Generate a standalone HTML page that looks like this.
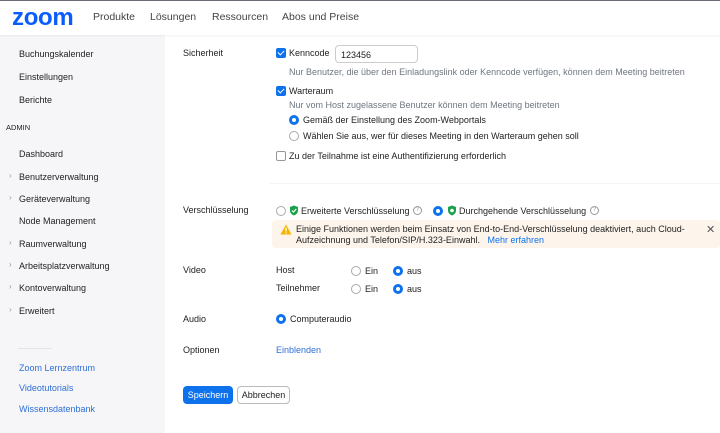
<!DOCTYPE html>
<html><head><meta charset="utf-8"><style>
*{margin:0;padding:0;box-sizing:border-box}
body{width:720px;height:433px;overflow:hidden;background:#fff;font-family:"Liberation Sans",sans-serif;font-size:9px;color:#222;position:relative}
.a{position:absolute;white-space:nowrap}
.side{position:absolute;left:0;top:35px;width:165px;height:398px;background:#f6f6f8}
.hdr{position:absolute;left:0;top:0;width:720px;height:35px;background:#fff;border-top:1px solid #6b6b75;box-shadow:0 1px 2px rgba(0,0,0,.06)}
.nav{font-size:10.5px;color:#444;top:11px}
.s{left:19px;color:#222}
.c{color:#999;font-size:8px}
.gray{color:#6e7680}
.blue{color:#0e72ed}
.cb{position:absolute;width:10px;height:10px;border-radius:2px;background:#0e72ed}
.cb::after{content:"";position:absolute;left:3px;top:1px;width:3px;height:5px;border:solid #fff;border-width:0 1.5px 1.5px 0;transform:rotate(45deg)}
.cbo{position:absolute;width:10px;height:10px;border-radius:2px;border:1px solid #999;background:#fff}
.r{position:absolute;width:10px;height:10px;border-radius:50%;border:1px solid #aaa;background:#fff}
.ro{position:absolute;width:10px;height:10px;border-radius:50%;border:3px solid #0e72ed;background:#fff}
.q{position:absolute;width:9px;height:9px;border:1px solid #999;border-radius:50%;font-size:6px;line-height:7px;text-align:center;color:#999}
</style></head><body>
<div class="side"></div>
<div class="hdr"></div>
<div class="a" style="left:12px;top:4px;font-size:24px;font-weight:bold;color:#0b5cff;letter-spacing:-0.3px">zoom</div>
<div class="a nav" style="left:93px">Produkte</div>
<div class="a nav" style="left:150px">Lösungen</div>
<div class="a nav" style="left:212px">Ressourcen</div>
<div class="a nav" style="left:282px">Abos und Preise</div>

<div class="a s" style="top:49px">Buchungskalender</div>
<div class="a s" style="top:72px">Einstellungen</div>
<div class="a s" style="top:95px">Berichte</div>
<div class="a" style="left:6px;top:123px;font-size:7.5px">ADMIN</div>
<div class="a s" style="top:149px">Dashboard</div>
<div class="a s" style="top:172px">Benutzerverwaltung</div>
<div class="a s" style="top:194px">Geräteverwaltung</div>
<div class="a s" style="top:216px">Node Management</div>
<div class="a s" style="top:239px">Raumverwaltung</div>
<div class="a s" style="top:261px">Arbeitsplatzverwaltung</div>
<div class="a s" style="top:283px">Kontoverwaltung</div>
<div class="a s" style="top:306px">Erweitert</div>
<div class="a c" style="left:9px;top:171px">›</div>
<div class="a c" style="left:9px;top:193px">›</div>
<div class="a c" style="left:9px;top:238px">›</div>
<div class="a c" style="left:9px;top:260px">›</div>
<div class="a c" style="left:9px;top:282px">›</div>
<div class="a c" style="left:9px;top:305px">›</div>
<div class="a" style="left:18px;top:348px;width:34px;border-top:1px solid #e4e4e8"></div>
<div class="a s" style="top:363px;color:#2d6fd6">Zoom Lernzentrum</div>
<div class="a s" style="top:383px;color:#2d6fd6">Videotutorials</div>
<div class="a s" style="top:404px;color:#2d6fd6">Wissensdatenbank</div>

<div class="a" style="left:183px;top:48px">Sicherheit</div>
<div class="cb" style="left:276px;top:48px"></div>
<div class="a" style="left:289px;top:48px">Kenncode</div>
<div class="a" style="left:335px;top:45px;width:83px;height:18px;border:1px solid #ccc;border-radius:4px;padding:4px 0 0 5px">123456</div>
<div class="a gray" style="left:289px;top:67px">Nur Benutzer, die über den Einladungslink oder Kenncode verfügen, können dem Meeting beitreten</div>
<div class="cb" style="left:276px;top:86px"></div>
<div class="a" style="left:289px;top:86px">Warteraum</div>
<div class="a gray" style="left:289px;top:100px">Nur vom Host zugelassene Benutzer können dem Meeting beitreten</div>
<div class="ro" style="left:289px;top:115px"></div>
<div class="a" style="left:303px;top:115px">Gemäß der Einstellung des Zoom-Webportals</div>
<div class="r" style="left:289px;top:131px"></div>
<div class="a" style="left:303px;top:131px">Wählen Sie aus, wer für dieses Meeting in den Warteraum gehen soll</div>
<div class="cbo" style="left:276px;top:151px"></div>
<div class="a" style="left:289px;top:151px">Zu der Teilnahme ist eine Authentifizierung erforderlich</div>
<div class="a" style="left:270px;top:183px;width:450px;border-top:1px solid #f4f4f6"></div>

<div class="a" style="left:183px;top:205px">Verschlüsselung</div>
<div class="r" style="left:276px;top:206px"></div>
<svg class="a" style="left:289px;top:205px" width="10" height="11" viewBox="0 0 10 11"><path d="M5 0.5L9 2v3.5c0 2.5-2 4.2-4 5-2-.8-4-2.5-4-5V2z" fill="#1aa24a"/><path d="M3 5.5l1.5 1.5 2.7-3" stroke="#fff" stroke-width="1.2" fill="none"/></svg>
<div class="a" style="left:301px;top:206px">Erweiterte Verschlüsselung</div>
<div class="q" style="left:413px;top:206px">?</div>
<div class="ro" style="left:433px;top:206px"></div>
<svg class="a" style="left:447px;top:205px" width="10" height="11" viewBox="0 0 10 11"><path d="M5 0.5L9 2v3.5c0 2.5-2 4.2-4 5-2-.8-4-2.5-4-5V2z" fill="#1aa24a"/><circle cx="5" cy="5.5" r="1.8" fill="#fff"/></svg>
<div class="a" style="left:459px;top:206px">Durchgehende Verschlüsselung</div>
<div class="q" style="left:590px;top:206px">?</div>
<div class="a" style="left:272px;top:220px;width:448px;height:28px;background:#fdf5ec;border-radius:4px"></div>
<svg class="a" style="left:280px;top:224px" width="12" height="11" viewBox="0 0 12 11"><path d="M6 0.5L11.5 10.5H0.5z" fill="#f5b400"/><rect x="5.4" y="3.5" width="1.2" height="4" fill="#fff"/><rect x="5.4" y="8.3" width="1.2" height="1.2" fill="#fff"/></svg>
<div class="a" style="left:296px;top:224px;line-height:11px">Einige Funktionen werden beim Einsatz von End-to-End-Verschlüsselung deaktiviert, auch Cloud-<br>Aufzeichnung und Telefon/SIP/H.323-Einwahl. &nbsp;&nbsp;<span class="blue">Mehr erfahren</span></div>
<div class="a" style="left:706px;top:223px;color:#555;font-size:11px">✕</div>

<div class="a" style="left:183px;top:265px">Video</div>
<div class="a" style="left:276px;top:265px">Host</div>
<div class="r" style="left:351px;top:266px"></div><div class="a" style="left:365px;top:266px">Ein</div>
<div class="ro" style="left:393px;top:266px"></div><div class="a" style="left:407px;top:266px">aus</div>
<div class="a" style="left:276px;top:283px">Teilnehmer</div>
<div class="r" style="left:351px;top:284px"></div><div class="a" style="left:365px;top:284px">Ein</div>
<div class="ro" style="left:393px;top:284px"></div><div class="a" style="left:407px;top:284px">aus</div>

<div class="a" style="left:183px;top:314px">Audio</div>
<div class="ro" style="left:276px;top:314px"></div>
<div class="a" style="left:290px;top:314px">Computeraudio</div>

<div class="a" style="left:183px;top:345px">Optionen</div>
<div class="a" style="left:276px;top:345px;color:#2d6fd6">Einblenden</div>

<div class="a" style="left:183px;top:386px;width:50px;height:18px;background:#0e72ed;border-radius:4px;color:#fff;text-align:center;line-height:18px">Speichern</div>
<div class="a" style="left:237px;top:386px;width:53px;height:18px;border:1px solid #bbb;border-radius:4px;text-align:center;line-height:16px">Abbrechen</div>
</body></html>
